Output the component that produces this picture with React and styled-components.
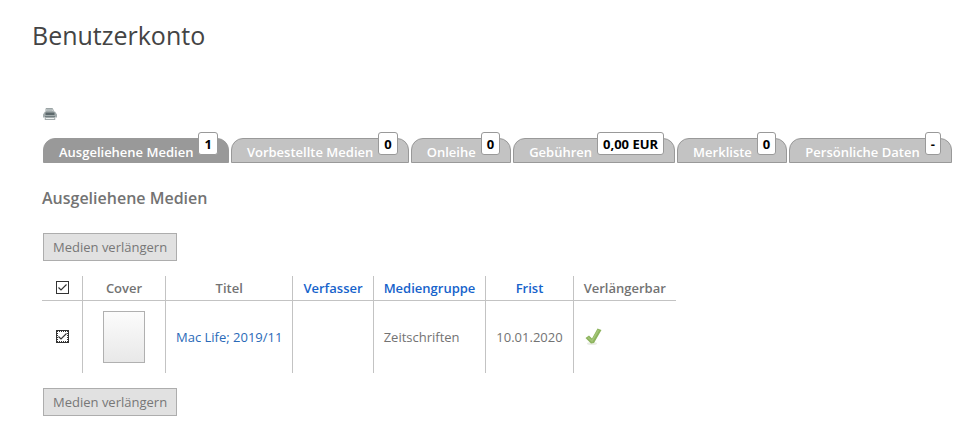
import React, { useState } from 'react';
import styled, { createGlobalStyle } from 'styled-components';


// STYLES


const GlobalStyle = createGlobalStyle`
    * {
        box-sizing: border-box;
    }

    body {
        margin: 0;
        background: #ffffff;
        color: #737373;
        font-family: "Open Sans", "Noto Sans", sans-serif;
        font-size: 13px;
        line-height: 18px;
    }
`;

const Page = styled.main`
    padding: 18px 24px 11px 32px;
`;

const PageTitle = styled.h1`
    margin: 0;
    color: #444444;
    font-size: 25px;
    font-weight: 400;
    line-height: 34px;
`;

const Account = styled.div`
    padding: 54px 0 0 10px;
`;

const PrintButton = styled.button`
    display: block;
    margin: 0;
    padding: 0;
    border: 0;
    background: none;
    cursor: pointer;

    svg {
        display: block;
    }
`;

const TabBar = styled.nav`
    display: flex;
    gap: 2px;
    padding: 16px 0 0 1px;
`;

const Tab = styled.a`
    display: flex;
    align-items: flex-start;
    gap: 5px;
    height: 25px;
    padding: 0 10px 0 15px;
    border: 1px solid #999999;
    border-radius: 12px 12px 0 0;
    background: ${props => (props.$active ? '#999999' : '#c3c3c3')};
    color: #ffffff;
    font-weight: 600;
    text-decoration: none;
    white-space: nowrap;
`;

const TabText = styled.span`
    padding-top: 4px;
`;

const Badge = styled.span`
    height: 23px;
    margin-top: -7px;
    padding: 2px 5px;
    border: 1px solid #999999;
    border-radius: 3px;
    background: #ffffff;
    color: #000000;
    font-weight: 700;
`;

const SectionTitle = styled.h2`
    margin: 24px 0;
    font-size: 16px;
    font-weight: 600;
    line-height: 22px;
`;

const RenewButton = styled.button`
    display: block;
    margin: 0 0 0 1px;
    padding: 4px 9px;
    border: 1px solid #adadad;
    background: #e1e1e1;
    color: #777777;
    font: inherit;
    cursor: pointer;
`;

const MediaTable = styled.table`
    margin: 15px 0;
    border-collapse: collapse;

    th, td {
        padding: 0 10px;
        border-left: 1px solid #c3c3c3;
        white-space: nowrap;
    }

    th:first-child, td:first-child {
        padding: 0 12px 0 14px;
        border-left: 0;
    }

    th {
        height: 24px;
        border-bottom: 1px solid #c3c3c3;
        font-weight: 600;
        text-align: center;
    }

    td {
        height: 73px;
    }
`;

const SortLink = styled.a`
    color: #1663cb;
    text-decoration: none;
`;

const TitleLink = styled.a`
    color: #2a6ab8;
    text-decoration: none;
`;

const Cover = styled.div`
    width: 42px;
    height: 52px;
    margin: 0 10px;
    border: 1px solid #b0b0b0;
    background: linear-gradient(#fcfcfc, #e8e8e8);
`;

const CheckLabel = styled.label`
    display: grid;
    width: 14px;
    height: 14px;

    input, svg {
        grid-area: 1 / 1;
        width: 13px;
        height: 13px;
        margin: 0;
    }

    input {
        appearance: none;
        border: 1px solid #333333;
        background: #ffffff;
    }

    svg {
        pointer-events: none;
        visibility: hidden;
    }

    input:checked + svg {
        visibility: visible;
    }
`;


// ICONS


const PrinterIcon = () => (
    <svg width="16" height="16" viewBox="0 0 16 16" aria-hidden="true">
        <path d="M4 2.500h6.500l1 3H4z" fill="#dfe5e5" stroke="#9ba4a5" />
        <path d="M5 4h5" stroke="#879294" />
        <path d="M3 5.500h10l2 3v3h-2l-1-1.500H4l-1 1.500H1V8.500z" fill="#a3acad" />
        <path d="M3.500 6.500h9v2.500h-9z" fill="#5c686b" />
        <path d="M3 10h10v1.500H3z" fill="#727e81" />
        <path d="M3.500 11.500h9l.5 2H3z" fill="#eef1f1" stroke="#a2aaab" />
    </svg>
);

const TickIcon = () => (
    <svg width="20" height="20" viewBox="0 0 20 20" role="img" aria-label="verlängerbar">
        <ellipse cx="8" cy="18.500" rx="5" ry="1.500" fill="#e9ede4" />
        <path d="M1.500 13l3.500-2.500 3 3L13.500 3.500l4 1.500L10 18l-3 .5z" fill="#8db35e" />
        <path d="M4 12.500l4 3.500 6.500-11" fill="none" stroke="#a3c676" strokeWidth="1.500" />
    </svg>
);

const CheckBox = ({ label, checked, onChange, focused }) => (
    <CheckLabel>
        <input type="checkbox" aria-label={label} checked={checked} onChange={onChange} />
        <svg viewBox="0 0 13 13" aria-hidden="true">
            {focused && (
                <path
                    d="M1 1.500h11M1 11.500h11M1.500 1v11M11.500 1v11"
                    fill="none"
                    stroke="#333333"
                    strokeDasharray="1 1"
                    shapeRendering="crispEdges"
                />
            )}
            <path d="M2.500 6.500l2.500 2.500 5.500-5.500" fill="none" stroke="#333333" strokeWidth="1.200" />
        </svg>
    </CheckLabel>
);


// COMPONENT


const tabs = [
    { name: 'Ausgeliehene Medien', value: '1' },
    { name: 'Vorbestellte Medien', value: '0' },
    { name: 'Onleihe', value: '0' },
    { name: 'Gebühren', value: '0,00 EUR' },
    { name: 'Merkliste', value: '0' },
    { name: 'Persönliche Daten', value: '-' },
];

const App = () => {
    const [selected, setSelected] = useState(true);
    const toggle = () => setSelected(!selected);

    return (
        <Page>
            <GlobalStyle />
            <PageTitle>Benutzerkonto</PageTitle>
            <Account>
                <PrintButton type="button" aria-label="Drucken"><PrinterIcon /></PrintButton>
                <TabBar>
                    {tabs.map((tab, index) => (
                        <Tab href="#0" key={tab.name} $active={index === 0}>
                            <TabText>{tab.name}</TabText>
                            <Badge>{tab.value}</Badge>
                        </Tab>
                    ))}
                </TabBar>
                <SectionTitle>Ausgeliehene Medien</SectionTitle>
                <RenewButton type="button">Medien verlängern</RenewButton>
                <MediaTable>
                    <thead>
                        <tr>
                            <th><CheckBox label="Alle auswählen" checked={selected} onChange={toggle} /></th>
                            <th>Cover</th>
                            <th>Titel</th>
                            <th><SortLink href="#0">Verfasser</SortLink></th>
                            <th><SortLink href="#0">Mediengruppe</SortLink></th>
                            <th><SortLink href="#0">Frist</SortLink></th>
                            <th>Verlängerbar</th>
                        </tr>
                    </thead>
                    <tbody>
                        <tr>
                            <td><CheckBox label="Mac Life auswählen" checked={selected} onChange={toggle} focused /></td>
                            <td><Cover /></td>
                            <td><TitleLink href="#0">Mac Life; 2019/11</TitleLink></td>
                            <td></td>
                            <td>Zeitschriften</td>
                            <td>10.01.2020</td>
                            <td><TickIcon /></td>
                        </tr>
                    </tbody>
                </MediaTable>
                <RenewButton type="button">Medien verlängern</RenewButton>
            </Account>
        </Page>
    );
};

export default App;
